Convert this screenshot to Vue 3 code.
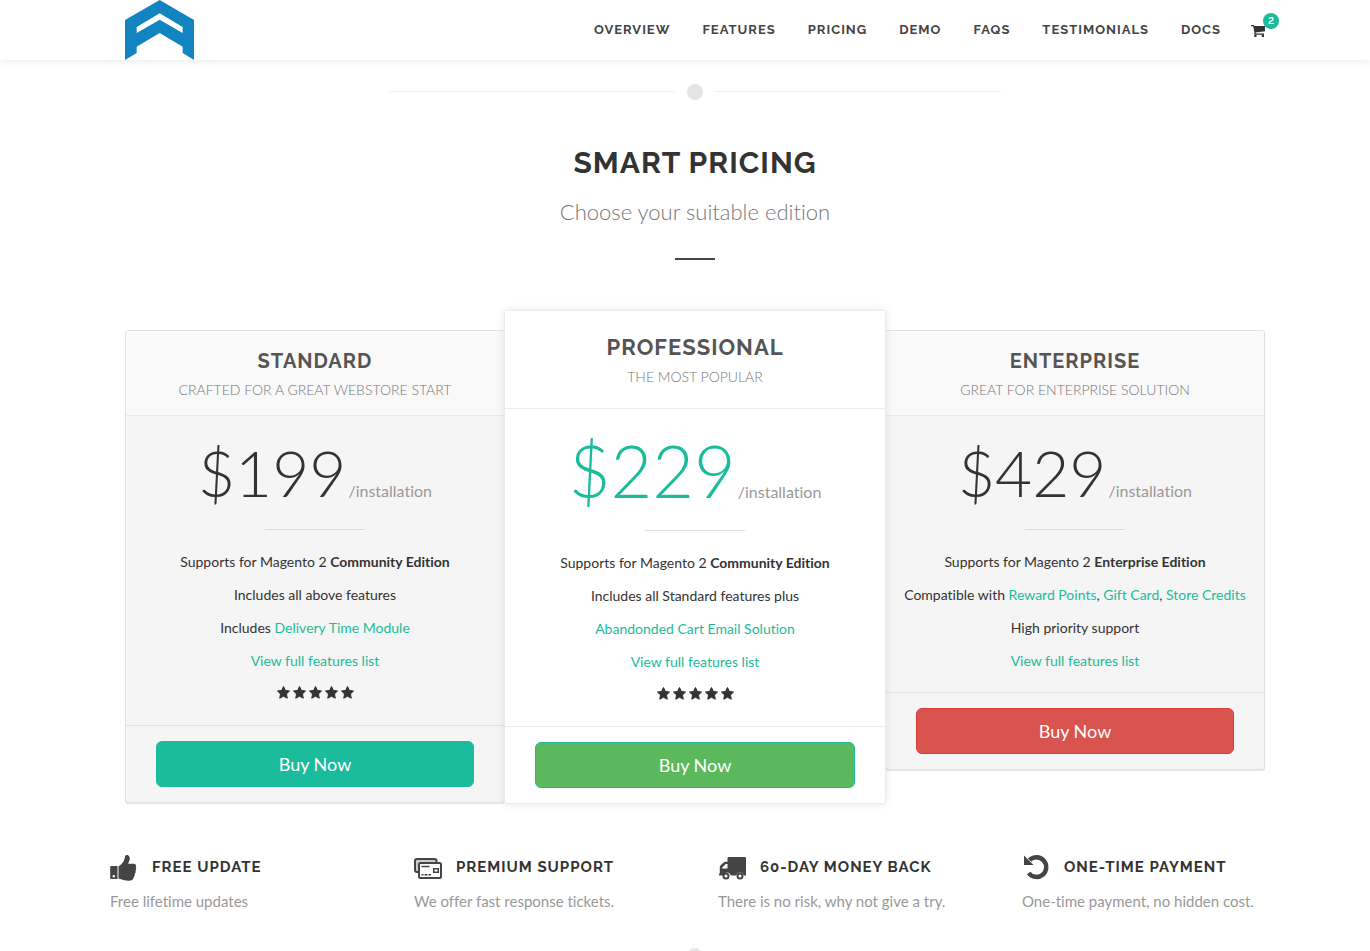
<script setup>
import { ref } from 'vue';

const menu = ['Overview', 'Features', 'Pricing', 'Demo', 'FAQs', 'Testimonials', 'Docs'];

const cartCount = ref(2);

const plans = [
  {
    id: 'standard',
    name: 'Standard',
    tagline: 'Crafted for a great webstore start',
    price: '$199',
    features: [
      [{ text: 'Supports for Magento 2 ' }, { text: 'Community Edition', type: 'strong' }],
      [{ text: 'Includes all above features' }],
      [{ text: 'Includes ' }, { text: 'Delivery Time Module', type: 'link' }],
      [{ text: 'View full features list', type: 'link' }],
    ],
    stars: 5,
  },
  {
    id: 'professional',
    name: 'Professional',
    tagline: 'The most popular',
    price: '$229',
    features: [
      [{ text: 'Supports for Magento 2 ' }, { text: 'Community Edition', type: 'strong' }],
      [{ text: 'Includes all Standard features plus' }],
      [{ text: 'Abandonded Cart Email Solution', type: 'link' }],
      [{ text: 'View full features list', type: 'link' }],
    ],
    stars: 5,
  },
  {
    id: 'enterprise',
    name: 'Enterprise',
    tagline: 'Great for enterprise solution',
    price: '$429',
    features: [
      [{ text: 'Supports for Magento 2 ' }, { text: 'Enterprise Edition', type: 'strong' }],
      [
        { text: 'Compatible with ' },
        { text: 'Reward Points', type: 'link' },
        { text: ', ' },
        { text: 'Gift Card', type: 'link' },
        { text: ', ' },
        { text: 'Store Credits', type: 'link' },
      ],
      [{ text: 'High priority support' }],
      [{ text: 'View full features list', type: 'link' }],
    ],
    stars: 0,
  },
];

const benefits = [
  { icon: 'thumb', title: 'Free Update', text: 'Free lifetime updates' },
  { icon: 'cards', title: 'Premium Support', text: 'We offer fast response tickets.' },
  { icon: 'truck', title: '60-Day Money Back', text: 'There is no risk, why not give a try.' },
  { icon: 'undo', title: 'One-Time Payment', text: 'One-time payment, no hidden cost.' },
];
</script>

<template>
  <div class="page">
    <header class="header">
      <div class="container header-inner">
        <a href="#" class="logo" aria-label="Home">
          <svg viewBox="0 0 207 180" width="69" height="60">
            <path
              fill="#1285c1"
              fill-rule="evenodd"
              d="M0 60L104 0l103 60v120l-34-21v-19l-69-41-69 41v19L0 180zM35 81v18l69-40 69 40V81l-69-41z"
            />
          </svg>
        </a>
        <nav class="menu">
          <a v-for="item in menu" :key="item" href="#" class="menu-link">{{ item }}</a>
          <a href="#" class="cart" aria-label="Cart">
            <svg viewBox="0 0 14 12" width="14" height="12" fill="#333">
              <path d="M0 0h3l.4 1H14v5.200L4.600 7.500v1h8.400v1.300H3.400V7.300L2.200 1.200H0z" />
              <path d="M3.300 9.500h2.200V12H3.300zM10.800 9.500H13V12h-2.200z" />
            </svg>
            <span class="cart-count">{{ cartCount }}</span>
          </a>
        </nav>
      </div>
    </header>

    <main class="container">
      <div class="divider"><span class="dot"></span></div>

      <div class="heading">
        <h2>Smart Pricing</h2>
        <p>Choose your suitable edition</p>
      </div>

      <section class="pricing">
        <article v-for="plan in plans" :key="plan.id" class="plan" :class="plan.id">
          <div class="plan-title">
            <h3>{{ plan.name }}</h3>
            <span>{{ plan.tagline }}</span>
          </div>
          <div class="plan-price">
            <span class="amount">{{ plan.price }}</span>
            <span class="tenure">/installation</span>
          </div>
          <ul class="plan-features">
            <li v-for="(feature, i) in plan.features" :key="i">
              <template v-for="(part, j) in feature" :key="j">
                <a v-if="part.type === 'link'" href="#">{{ part.text }}</a>
                <strong v-else-if="part.type === 'strong'">{{ part.text }}</strong>
                <template v-else>{{ part.text }}</template>
              </template>
            </li>
            <li v-if="plan.stars" class="stars">
              <svg v-for="n in plan.stars" :key="n" viewBox="0 0 26 26" width="13" height="13">
                <path
                  fill="#333"
                  stroke="#333"
                  stroke-width="2"
                  stroke-linejoin="round"
                  d="M13 1l3.700 7.800 8.300 1.200-6 5.900L20.500 24.500 13 20.400 5.500 24.500 7 15.900 1 10l8.300-1.200z"
                />
              </svg>
            </li>
          </ul>
          <div class="plan-action">
            <a href="#" class="buy">Buy Now</a>
          </div>
        </article>
      </section>

      <section class="benefits">
        <div v-for="benefit in benefits" :key="benefit.title" class="benefit">
          <h3>
            <svg v-if="benefit.icon === 'thumb'" viewBox="0 0 28 28" width="28" height="28">
              <path
                fill="#444"
                fill-rule="evenodd"
                d="M1 12h6.500v13H1a.8.8 0 0 1-.8-.8V12.800A.8.8 0 0 1 1 12zm2.800 9a1.300 1.300 0 1 0 0 2.600 1.300 1.300 0 0 0 0-2.600z"
              />
              <path
                fill="#444"
                d="M8.500 12.300c2.500-1 5.300-4.600 6-7.300.4-1.700.3-3.500 2-4 2.300-.3 3.700 2.200 3.200 4.600-.3 1.500-1.200 2.900-1.600 4.200h5.400c2.300 0 3.300 2 2.300 3.700.6 1 .5 2.400-.3 3.300.4 1.200.1 2.400-.8 3.200.2 1.300-.2 2.400-.9 3-.3 2.500-1.700 3.800-5 3.800-4.500 0-6.500-1.300-10.300-2.300z"
              />
            </svg>
            <svg v-else-if="benefit.icon === 'cards'" viewBox="0 0 28 28" width="28" height="28">
              <rect x="1" y="5" width="21.500" height="13" rx="2" fill="#ccc" stroke="#444" stroke-width="2" />
              <rect x="5" y="9" width="22" height="15" rx="1.500" fill="#fff" stroke="#444" stroke-width="2" />
              <path
                fill="none"
                stroke="#444"
                stroke-width="1.500"
                d="M7.500 12.500h8M7.500 20.700h2M10.500 20.700h3M14.500 20.700h2.500M19.700 14.700h4.600v3.600h-4.600z"
              />
            </svg>
            <svg v-else-if="benefit.icon === 'truck'" viewBox="0 0 28 28" width="28" height="28">
              <path
                fill="#444"
                fill-rule="evenodd"
                d="M9.500 4A1 1 0 0 1 10.500 3h16.500a1 1 0 0 1 1 1V21.500h-2.300a3.800 3.800 0 0 0-7.400 0h-5.600a3.800 3.800 0 0 0-7.400 0H1V20l.8-.7V13.500c0-1 .2-1.500.9-2.200l2.600-2.600c.7-.7 1.400-1 2.300-1h1.900zM9.500 10H7.700l-3.500 3.500V14.500h5.300z"
              />
              <circle cx="8" cy="22" r="2.500" fill="#fff" stroke="#444" stroke-width="2" />
              <circle cx="22" cy="22" r="2.500" fill="#fff" stroke="#444" stroke-width="2" />
            </svg>
            <svg v-else viewBox="0 0 28 28" width="28" height="28">
              <path
                fill="none"
                stroke="#444"
                stroke-width="4.500"
                d="M7.500 6.200A9.800 9.800 0 1 1 6.600 19"
              />
              <path fill="#444" d="M2 1.500v9.500h9.500z" />
            </svg>
            {{ benefit.title }}
          </h3>
          <p>{{ benefit.text }}</p>
        </div>
      </section>

      <div class="divider last"><span class="dot"></span></div>
    </main>
  </div>
</template>

<style>
body {
  margin: 0;
  background: #fff;
}
</style>

<style scoped>
.page {
  font-family: Lato, sans-serif;
  font-size: 14px;
  font-variant-ligatures: none;
  color: #333;
}

.page a {
  color: #1abc9c;
  text-decoration: none;
}

.container {
  max-width: 1140px;
  margin: 0 auto;
  left: 10px;
  position: relative;
}

.header {
  background: #fff;
  box-shadow: 0 0 10px rgba(0, 0, 0, 0.1);
}

.header-inner {
  display: flex;
  justify-content: space-between;
  height: 60px;
}

.logo svg {
  display: block;
}

.menu {
  display: flex;
  align-items: center;
  gap: 32px;
}

.page .menu-link {
  padding-bottom: 2px;
  font-family: Raleway, Lato, sans-serif;
  font-size: 13px;
  font-weight: 700;
  letter-spacing: 1px;
  text-transform: uppercase;
  color: #444;
}

.cart {
  position: relative;
  display: flex;
  margin: 2px 0 0 -2px;
}

.page .cart-count {
  position: absolute;
  top: -12px;
  right: -14px;
  width: 16px;
  height: 16px;
  border-radius: 50%;
  background: #1abc9c;
  color: #fff;
  font-family: Raleway, Lato, sans-serif;
  font-size: 11px;
  font-weight: 600;
  line-height: 16px;
  text-align: center;
}

.divider {
  display: flex;
  align-items: center;
  justify-content: center;
  gap: 12px;
  max-width: 612px;
  margin: 0 auto;
  padding-top: 24px;
}

.divider::before,
.divider::after {
  content: '';
  flex: 1;
  height: 1px;
  margin-bottom: 1px;
  background: #eee;
}

.dot {
  width: 16px;
  height: 16px;
  border-radius: 50%;
  background: #e5e5e5;
}

.heading {
  margin: 41px 0 50px;
  text-align: center;
}

.heading h2 {
  margin: 0;
  font-family: Raleway, Lato, sans-serif;
  font-size: 30px;
  line-height: 44px;
  font-weight: 700;
  letter-spacing: 1px;
  text-transform: uppercase;
}

.heading p {
  margin: 9px 0 0;
  font-size: 22px;
  line-height: 36px;
  font-weight: 300;
  color: #777;
}

.heading::after {
  content: '';
  display: block;
  width: 40px;
  height: 2px;
  margin: 28px auto 0;
  background: #444;
}

.pricing {
  display: grid;
  grid-template-columns: repeat(3, 1fr);
  align-items: start;
}

.plan {
  margin-top: 20px;
  border: 1px solid #e2e2e2;
  border-radius: 3px;
  background: #f5f5f5;
  box-shadow: 0 1px 1px rgba(0, 0, 0, 0.1);
  text-align: center;
}

.plan-title {
  padding: 15px 0 11px;
  border-bottom: 1px solid #ebebeb;
  background: #f9f9f9;
  text-transform: uppercase;
}

.plan-title h3 {
  margin: 0;
  font-family: Raleway, Lato, sans-serif;
  font-size: 20px;
  line-height: 30px;
  font-weight: 700;
  letter-spacing: 1px;
  color: #555;
}

.plan-title span {
  display: block;
  line-height: 28px;
  font-weight: 300;
  color: #777;
}

.plan-price {
  padding-top: 25px;
  font-size: 64px;
  line-height: 1;
}

.plan-price::after {
  content: '';
  display: block;
  width: 100px;
  height: 1px;
  margin: 24px auto 0;
  background: #ddd;
}

.amount {
  font-weight: 300;
}

.tenure {
  margin-left: 2px;
  font-size: 16px;
  color: #999;
}

.plan-features {
  margin: 0;
  padding: 15px 0;
  list-style: none;
}

.plan-features li {
  padding: 6px 0;
  line-height: 21px;
}

.plan-features .stars {
  display: flex;
  justify-content: center;
  gap: 3px;
  height: 21px;
  padding: 9px 0 3px;
}

.plan-action {
  padding: 15px 30px;
  border-top: 1px solid #e2e2e2;
}

.page .buy {
  display: block;
  border: 1px solid #1abc9c;
  border-radius: 6px;
  background: #1abc9c;
  color: #fff;
  font-size: 18px;
  line-height: 44px;
}

.professional {
  position: relative;
  margin: 0 -1px;
  border-color: #ebebeb;
  background: #fff;
  box-shadow: 0 0 8px rgba(0, 0, 0, 0.1);
}

.professional .plan-title {
  padding: 20px 0 17px;
  background: #fff;
}

.professional h3 {
  font-size: 22px;
  line-height: 32px;
}

.professional .plan-price {
  font-size: 72px;
}

.professional .amount {
  color: #1abc9c;
}

.professional .plan-action {
  border-color: #ebebeb;
}

.professional .buy {
  background: #5cb85c;
}

.enterprise .buy {
  border-color: #d43f3a;
  background: #d9534f;
}

.benefits {
  display: grid;
  grid-template-columns: repeat(4, 1fr);
  gap: 46px;
  margin: 49px -15px 34px;
}

.benefit h3 {
  display: flex;
  align-items: center;
  gap: 14px;
  margin: 0;
  font-family: Raleway, Lato, sans-serif;
  font-size: 15px;
  line-height: 28px;
  font-weight: 700;
  letter-spacing: 1px;
  text-transform: uppercase;
  white-space: nowrap;
}

.benefit h3 svg {
  margin: 1px 0 -1px;
}

.benefit p {
  margin: 7px 0 0;
  font-size: 15px;
  line-height: 26px;
  color: #999;
}

.divider.last {
  padding-top: 0;
}
</style>
